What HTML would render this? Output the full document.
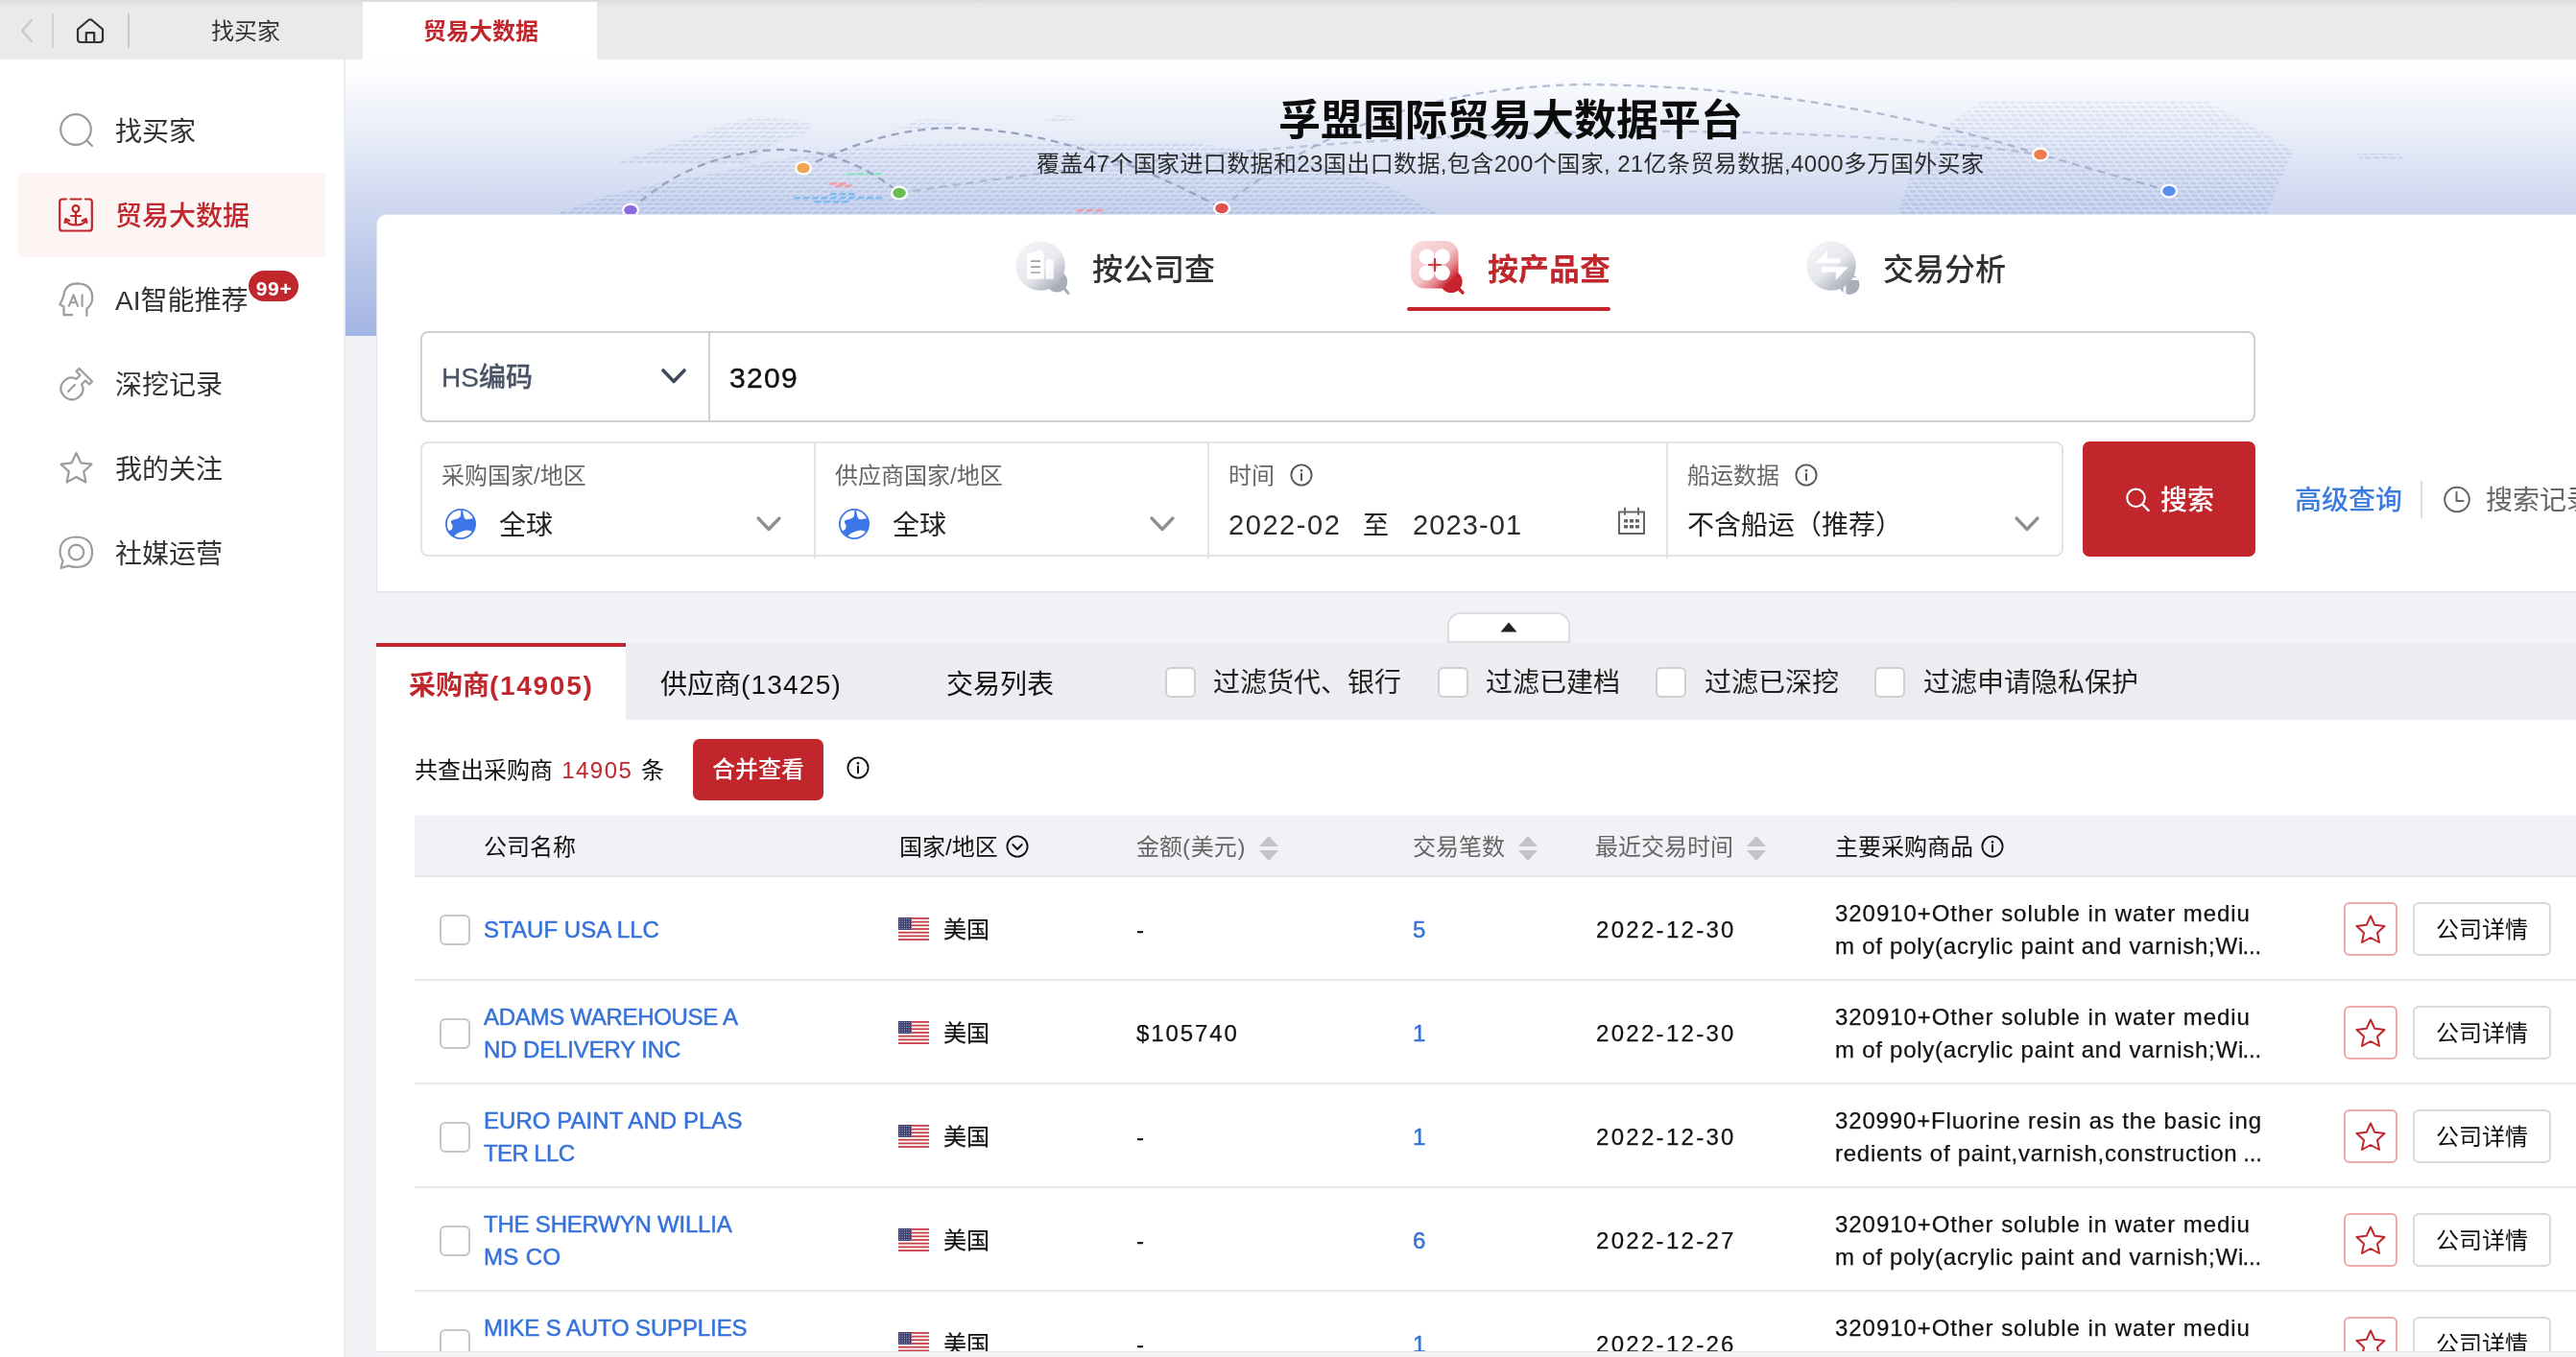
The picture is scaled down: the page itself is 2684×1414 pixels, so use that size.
<!DOCTYPE html>
<html lang="zh-CN"><head><meta charset="utf-8"><title>贸易大数据</title>
<style>
*{box-sizing:border-box;margin:0;padding:0}
html,body{width:2684px;height:1414px;overflow:hidden}
body{font-family:"Liberation Sans","Noto Sans CJK SC",sans-serif;position:relative;background:#f1f2f6;color:#222;-webkit-font-smoothing:antialiased}
.a{position:absolute}
.t{position:absolute;white-space:nowrap;will-change:transform}
svg{position:absolute;overflow:visible}
.topbar{left:0;top:0;width:2684px;height:62px;background:linear-gradient(180deg,#d9dadc 0,#e3e4e6 3px,#e9eaec 8px)}
.side{left:0;top:62px;width:360px;height:1352px;background:#fff;border-right:2px solid #ececec}
.mi{left:120px;font-size:28px;line-height:40px;color:#333}
.card{left:392px;top:223px;width:2400px;height:395px;background:#fff;border-radius:11px 0 0 0;border:1px solid #e3e6ee;border-bottom:2px solid #e6e7ea}
.box{border:2px solid #dcdcde;border-radius:8px;background:#fff}
.lbl{font-size:24px;line-height:32px;color:#666}
.val{font-size:28px;line-height:40px;color:#222}
.cb{width:32px;height:32px;border:2px solid #cfcfd2;border-radius:6px;background:#fff}
.ft{font-size:28px;line-height:40px;color:#222;top:692px}
.th{font-size:24px;line-height:34px;top:866px}
.td{font-size:24px;line-height:34px;color:#111;-webkit-text-stroke:.25px}
.lnk{color:#3672da;-webkit-text-stroke:.5px #3672da}
.rowline{left:432px;width:2260px;height:2px;background:#e9e9ec}
.star{width:56px;height:56px;border:2px solid #eba9aa;border-radius:6px;background:#fff;left:2442px}
.dbtn{width:144px;height:56px;border:2px solid #d9d9dc;border-radius:6px;background:#fff;left:2514px;font-size:24px;line-height:54px;text-align:center;color:#111}
</style></head><body>
<div class="a topbar"></div>
<div class="a" style="left:378px;top:2px;width:244px;height:60px;background:#fff"></div>
<svg style="left:20px;top:18px" width="16" height="28" viewBox="0 0 16 28"><path d="M13 3 L3 14 L13 25" fill="none" stroke="#c8c8ca" stroke-width="2.2" stroke-linecap="round" stroke-linejoin="round"/></svg>
<div class="a" style="left:54px;top:14px;width:1.5px;height:36px;background:#d0d0d2"></div>
<svg style="left:78px;top:18px" width="32" height="28" viewBox="0 0 32 28"><path d="M3 12.5 L14.2 3 Q16 1.6 17.8 3 L29 12.5 V23 Q29 26 26 26 H6 Q3 26 3 23 Z" fill="none" stroke="#333" stroke-width="2.2" stroke-linejoin="round"/><path d="M11.8 26 V16.2 H20.2 V26" fill="none" stroke="#333" stroke-width="2.2" stroke-linejoin="round"/></svg>
<div class="a" style="left:133px;top:14px;width:2px;height:36px;background:#c9c9cb"></div>
<div class="t" style="left:220px;top:14px;font-size:24px;line-height:38px;color:#333">找买家</div>
<div class="t" style="left:441px;top:14px;font-size:24px;line-height:38px;color:#c0262b;font-weight:700">贸易大数据</div>
<div class="a side"></div>
<div class="a" style="left:19px;top:180px;width:320px;height:88px;background:#fdf5f4;border-radius:5px"></div>
<div class="t mi" style="top:118px">找买家</div>
<div class="t mi" style="top:206px;color:#c0262b;font-weight:500">贸易大数据</div>
<div class="t mi" style="top:294px">AI智能推荐</div>
<div class="t mi" style="top:382px">深挖记录</div>
<div class="t mi" style="top:470px">我的关注</div>
<div class="t mi" style="top:558px">社媒运营</div>
<div class="t" style="left:259px;top:282px;width:52px;height:32px;border-radius:16px;background:#c0262b;color:#fff;font-size:21px;line-height:37px;text-align:center;letter-spacing:.7px;font-weight:700;padding-left:1px">99+</div>
<svg style="left:60px;top:116px" width="40" height="40" viewBox="0 0 40 40"><circle cx="19" cy="19" r="15.8" fill="none" stroke="#9a9ca1" stroke-width="2.2"/><path d="M30.5 30.5 L36 36" stroke="#9a9ca1" stroke-width="2.2" stroke-linecap="round"/></svg>
<svg style="left:60px;top:204px" width="40" height="40" viewBox="0 0 40 40"><path d="M9 3.5 H5 Q2.2 3.5 2.2 6.3 V33.7 Q2.2 36.5 5 36.5 H33 Q35.8 36.5 35.8 33.7 V6.3 Q35.8 3.5 33 3.5 H29 M13.5 3.5 H24.5" fill="none" stroke="#c0262b" stroke-width="2.2" stroke-linecap="round"/><circle cx="19" cy="13.5" r="3.4" fill="none" stroke="#c0262b" stroke-width="2.2"/><path d="M19 17 V30 M14 21 H24 M8.5 24.5 Q10 30.5 19 30.5 Q28 30.5 29.5 24.5 M7.5 28 L8.5 24 L12.3 26 M30.5 28 L29.5 24 L25.7 26" fill="none" stroke="#c0262b" stroke-width="2.2" stroke-linecap="round" stroke-linejoin="round"/></svg>
<svg style="left:60px;top:292px" width="40" height="40" viewBox="0 0 40 40"><path d="M15.4 36.1 H6.5 V27.5 L2.3 25.3 Q5 21 6.3 16 Q8 3.4 20.7 3.4 Q36.2 4 36.2 18.4 Q36.2 25.5 30.4 29.5 V37" fill="none" stroke="#9a9ca1" stroke-width="2.2" stroke-linecap="round" stroke-linejoin="round"/><path d="M11.8 26.9 L16.6 15.3 L21 26.9 M13.5 23.2 H19.5 M25.6 15.3 V26.9" fill="none" stroke="#9a9ca1" stroke-width="2.1" stroke-linecap="round" stroke-linejoin="round"/></svg>
<svg style="left:60px;top:380px" width="40" height="40" viewBox="0 0 40 40"><path d="M22.5 4 L36 17.5 L33 20.5 L29 16.5 L25 20.5 Q29 27 23 33 Q15 40 7 33 Q-1 24 8 16 Q13 11.5 19.5 15 L23.5 11 L19.5 7 Z" fill="none" stroke="#9a9ca1" stroke-width="2.2" stroke-linejoin="round"/><path d="M11 28 L18 21" stroke="#9a9ca1" stroke-width="2.2" stroke-linecap="round"/></svg>
<svg style="left:60px;top:468px" width="40" height="40" viewBox="0 0 40 40"><path d="M19.5 4 L24.3 14.3 L35.5 15.7 L27.2 23.4 L29.4 34.5 L19.5 29 L9.6 34.5 L11.8 23.4 L3.5 15.7 L14.7 14.3 Z" fill="none" stroke="#9a9ca1" stroke-width="2.2" stroke-linejoin="round"/></svg>
<svg style="left:60px;top:556px" width="40" height="40" viewBox="0 0 40 40"><path d="M3.5 36 L5.5 28.5 Q2.5 24 2.5 19.5 Q2.5 4 19.5 3.5 Q36 4 36 19.5 Q36 34 20.5 35 Q15 35 11.5 33.5 Z" fill="none" stroke="#9a9ca1" stroke-width="2.2" stroke-linejoin="round"/><circle cx="19.5" cy="19.5" r="7.8" fill="none" stroke="#9a9ca1" stroke-width="2.2"/></svg>
<div class="a" style="left:360px;top:62px;width:2324px;height:288px;background:linear-gradient(180deg,#fefeff 0%,#fbfcfe 7%,#ccd6ef 55.5%,#a3b4e2 100%)"></div>
<svg style="left:360px;top:62px;overflow:hidden" width="2324" height="162" viewBox="0 0 2324 162"><defs>
<pattern id="dpL" width="8.8" height="4.4" patternUnits="userSpaceOnUse" patternTransform="skewX(-50)"><rect x="0" y="0" width="6.4" height="2.3" fill="#8fa3d4"/></pattern>
<pattern id="dpR" width="8.8" height="4.4" patternUnits="userSpaceOnUse" patternTransform="skewX(38)"><rect x="0" y="0" width="6.4" height="2.3" fill="#8fa3d4"/></pattern>
<linearGradient id="fadeL" x1="0" y1="0" x2="0" y2="1"><stop offset="0" stop-color="#fff" stop-opacity=".2"/><stop offset=".45" stop-color="#fff" stop-opacity=".55"/><stop offset="1" stop-color="#fff" stop-opacity="1"/></linearGradient>
<mask id="mk" maskUnits="userSpaceOnUse" x="0" y="0" width="2324" height="162"><rect x="0" y="0" width="2324" height="162" fill="url(#fadeL)"/></mask>
<clipPath id="contL"><polygon points="283,108 340,88 400,66 430,59 485,65 482,76 445,88 420,108"/><polygon points="215,162 272,142 330,128 388,118 435,107 505,95 582,89 737,85 890,88 1000,103 1090,133 1140,162"/><polygon points="574,72 600,62 644,64 630,72"/><polygon points="725,66 737,58 765,59 755,66"/></clipPath>
<clipPath id="contR"><polygon points="1704,44 1940,44 1985,68 2030,96 2015,128 2002,162 1617,162 1630,123 1642,96 1670,68"/><polygon points="2095,98 2140,98 2145,105 2100,105"/></clipPath>
</defs><g mask="url(#mk)" opacity=".4"><rect x="0" y="0" width="2324" height="162" fill="url(#dpL)" clip-path="url(#contL)"/><rect x="0" y="0" width="2324" height="162" fill="url(#dpR)" clip-path="url(#contR)"/></g><path d="M524.0 118.0 l7 0 l-2.6 2.6 l-7 0z" fill="#8fe3c4"/><path d="M533.5 118.0 l7 0 l-2.6 2.6 l-7 0z" fill="#8fe3c4"/><path d="M543.0 118.0 l7 0 l-2.6 2.6 l-7 0z" fill="#8fe3c4"/><path d="M552.5 118.0 l7 0 l-2.6 2.6 l-7 0z" fill="#8fe3c4"/><path d="M506.0 128.0 l7 0 l-2.6 2.6 l-7 0z" fill="#f29aa0"/><path d="M515.5 128.0 l7 0 l-2.6 2.6 l-7 0z" fill="#f29aa0"/><path d="M512.0 130.5 l7 0 l-2.6 2.6 l-7 0z" fill="#f29aa0"/><path d="M521.5 130.5 l7 0 l-2.6 2.6 l-7 0z" fill="#f29aa0"/><path d="M468.0 143.0 l7 0 l-2.6 2.6 l-7 0z" fill="#7fbdf0"/><path d="M477.5 143.0 l7 0 l-2.6 2.6 l-7 0z" fill="#7fbdf0"/><path d="M487.0 143.0 l7 0 l-2.6 2.6 l-7 0z" fill="#7fbdf0"/><path d="M496.5 143.0 l7 0 l-2.6 2.6 l-7 0z" fill="#7fbdf0"/><path d="M506.0 143.0 l7 0 l-2.6 2.6 l-7 0z" fill="#7fbdf0"/><path d="M515.5 143.0 l7 0 l-2.6 2.6 l-7 0z" fill="#7fbdf0"/><path d="M525.0 143.0 l7 0 l-2.6 2.6 l-7 0z" fill="#7fbdf0"/><path d="M534.5 143.0 l7 0 l-2.6 2.6 l-7 0z" fill="#7fbdf0"/><path d="M544.0 143.0 l7 0 l-2.6 2.6 l-7 0z" fill="#7fbdf0"/><path d="M553.5 143.0 l7 0 l-2.6 2.6 l-7 0z" fill="#7fbdf0"/><path d="M490.0 147.0 l7 0 l-2.6 2.6 l-7 0z" fill="#7fbdf0"/><path d="M499.5 147.0 l7 0 l-2.6 2.6 l-7 0z" fill="#7fbdf0"/><path d="M509.0 147.0 l7 0 l-2.6 2.6 l-7 0z" fill="#7fbdf0"/><path d="M518.5 147.0 l7 0 l-2.6 2.6 l-7 0z" fill="#7fbdf0"/><path d="M506.0 139.0 l7 0 l-2.6 2.6 l-7 0z" fill="#7fbdf0"/><path d="M515.5 139.0 l7 0 l-2.6 2.6 l-7 0z" fill="#7fbdf0"/><path d="M525.0 139.0 l7 0 l-2.6 2.6 l-7 0z" fill="#7fbdf0"/><path d="M763.0 156.0 l7 0 l-2.6 2.6 l-7 0z" fill="#f29aa0"/><path d="M773.0 156.0 l7 0 l-2.6 2.6 l-7 0z" fill="#f29aa0"/><path d="M783.0 156.0 l7 0 l-2.6 2.6 l-7 0z" fill="#f29aa0"/><path d="M297.0 157.0 Q360.0 98.0 450.0 94.0 Q520.0 92.0 577.0 139.0" fill="none" stroke="#98a3c2" stroke-width="2.3" stroke-dasharray="8 6" stroke-linecap="butt"/><path d="M477.0 113.0 Q570.0 66.0 650.0 72.0 Q770.0 78.0 913.0 155.0" fill="none" stroke="#98a3c2" stroke-width="2.3" stroke-dasharray="8 6" stroke-linecap="butt"/><path d="M913.0 155.0 Q1060.0 30.0 1290.0 26.0 Q1540.0 28.0 1766.0 99.0 L1900.0 137.0" fill="none" stroke="#98a3c2" stroke-width="2.3" stroke-dasharray="8 6" stroke-linecap="butt" opacity=".7"/><path d="M577.0 139.0 Q990.0 78.0 1340.0 75.0 Q1590.0 74.0 1766.0 99.0" fill="none" stroke="#98a3c2" stroke-width="2.3" stroke-dasharray="8 6" stroke-linecap="butt" opacity=".55"/><ellipse cx="297.0" cy="157.0" rx="9" ry="7.6" fill="#fff"/><ellipse cx="297.0" cy="157.0" rx="6.8" ry="5.2" fill="#8a6be0"/><ellipse cx="477.0" cy="113.0" rx="9" ry="7.6" fill="#fff"/><ellipse cx="477.0" cy="113.0" rx="6.8" ry="5.2" fill="#eea555"/><ellipse cx="577.0" cy="139.0" rx="9" ry="7.6" fill="#fff"/><ellipse cx="577.0" cy="139.0" rx="6.8" ry="5.2" fill="#6cbd55"/><ellipse cx="913.0" cy="155.0" rx="9" ry="7.6" fill="#fff"/><ellipse cx="913.0" cy="155.0" rx="6.8" ry="5.2" fill="#e0524f"/><ellipse cx="1766.0" cy="99.0" rx="9" ry="7.6" fill="#fff"/><ellipse cx="1766.0" cy="99.0" rx="6.8" ry="5.2" fill="#ee7a4e"/><ellipse cx="1900.0" cy="137.0" rx="9" ry="7.6" fill="#fff"/><ellipse cx="1900.0" cy="137.0" rx="6.8" ry="5.2" fill="#5b8df0"/></svg>
<div class="t" style="left:1332px;top:94px;font-size:44px;line-height:64px;font-weight:700;color:#0b0b0b">孚盟国际贸易大数据平台</div>
<div class="t" style="left:1080px;top:154px;font-size:24px;line-height:34px;color:#2d2d2d;letter-spacing:.39px">覆盖47个国家进口数据和23国出口数据,包含200个国家, 21亿条贸易数据,4000多万国外买家</div>
<div class="a card"></div>
<div class="t" style="left:1138px;top:259px;font-size:32px;line-height:44px;color:#303030;font-weight:500">按公司查</div>
<div class="t" style="left:1550px;top:259px;font-size:32px;line-height:44px;color:#c0262b;font-weight:700">按产品查</div>
<div class="t" style="left:1962px;top:259px;font-size:32px;line-height:44px;color:#303030;font-weight:500">交易分析</div>
<div class="a" style="left:1466px;top:320px;width:212px;height:4px;background:#c0262b;border-radius:2px"></div>
<svg style="left:1050px;top:244px" width="70" height="70" viewBox="1050 244 70 70">
<defs><linearGradient id="g1" x1="0.15" y1="0.1" x2="0.85" y2="0.95"><stop offset="0" stop-color="#f3f4f7"/><stop offset=".55" stop-color="#e7e8ed"/><stop offset=".8" stop-color="#c3c7d0"/><stop offset="1" stop-color="#a7acb7"/></linearGradient>
<linearGradient id="g1b" x1="0" y1="0" x2="1" y2="0"><stop offset="0" stop-color="#fff"/><stop offset="1" stop-color="#fff" stop-opacity=".8"/></linearGradient></defs>
<circle cx="1101.3" cy="293.5" r="10.9" fill="#a9aeb9"/>
<path d="M1108.3 299.7 L1113 305.5" stroke="#a9aeb9" stroke-width="3" stroke-linecap="round"/>
<circle cx="1084" cy="277" r="25.7" fill="url(#g1)"/>
<path d="M1070 290.7 V266.5 Q1070 264.8 1071.6 264.2 L1082.8 260.9 Q1087.7 260.6 1087.7 265.5 V290.7 Z" fill="#fff"/>
<path d="M1089.7 290.7 V273.5 Q1089.7 269.4 1093.8 269.4 Q1097.9 269.4 1097.9 273.5 V290.7 Z" fill="url(#g1b)"/>
<path d="M1074 272.1 H1084 M1074 278.1 H1084 M1074 284 H1084" stroke="#9da2ac" stroke-width="1.7"/>
</svg><svg style="left:1462px;top:244px" width="70" height="70" viewBox="1462 244 70 70">
<defs><linearGradient id="g2" x1="0.1" y1="0.1" x2="0.95" y2="0.95"><stop offset="0" stop-color="#f8dadd"/><stop offset=".5" stop-color="#f3c6ca"/><stop offset=".72" stop-color="#e27f86"/><stop offset=".88" stop-color="#c9252e"/><stop offset="1" stop-color="#c8232c"/></linearGradient></defs>
<circle cx="1512" cy="293.5" r="11.6" fill="#c8232c"/>
<path d="M1519.5 300.5 L1524 305" stroke="#c8232c" stroke-width="3.4" stroke-linecap="round"/>
<rect x="1470" y="251" width="49.5" height="49.5" rx="14" fill="url(#g2)"/>
<circle cx="1486.5" cy="267.5" r="8" fill="#fff"/><circle cx="1502.8" cy="267.5" r="8" fill="#fff"/><circle cx="1486.5" cy="284.3" r="8" fill="#fff"/><circle cx="1502.8" cy="284.3" r="8" fill="#fff"/>
<path d="M1488 276 H1502 M1495 269 V283" stroke="#b8212b" stroke-width="1.7"/>
</svg><svg style="left:1874px;top:244px" width="70" height="70" viewBox="1874 244 70 70">
<defs><linearGradient id="g3" x1="0.15" y1="0.1" x2="0.85" y2="0.95"><stop offset="0" stop-color="#f3f4f7"/><stop offset=".5" stop-color="#e6e8ed"/><stop offset=".78" stop-color="#bfc3cc"/><stop offset="1" stop-color="#a7acb7"/></linearGradient></defs>
<circle cx="1927" cy="296.5" r="10.5" fill="#a9aeb9"/>
<path d="M1916 290.5 H1940 M1922 284 V310" stroke="#f4f5f8" stroke-width="3"/>
<circle cx="1908" cy="277" r="25.7" fill="url(#g3)"/>
<path d="M1891 274 L1904 261.3 V269.5 H1917.5 V274 Z" fill="#fff"/>
<path d="M1898 278.3 H1925.7 L1912.8 291.9 V283.4 H1898 Z" fill="#fff"/>
</svg>
<div class="a box" style="left:438px;top:345px;width:1912px;height:95px;border-color:#cfcfd2"></div>
<div class="a" style="left:738px;top:347px;width:2px;height:91px;background:#cfcfd2"></div>
<div class="t" style="left:460px;top:374px;font-size:28px;line-height:40px;color:#4a5366;font-weight:500;-webkit-text-stroke:.3px #4a5366">HS编码</div>
<svg style="left:689px;top:384px" width="26" height="16" viewBox="0 0 26 16"><path d="M2 2 L13 13.5 L24 2" fill="none" stroke="#3f4a5c" stroke-width="3.6" stroke-linecap="round" stroke-linejoin="round"/></svg>
<div class="t" style="left:760px;top:374px;font-size:30px;line-height:40px;color:#111;letter-spacing:1.33px;-webkit-text-stroke:.4px #111">3209</div>

<div class="a box" style="left:438px;top:460px;width:1712px;height:120px;border-color:#e1e2e5"></div>
<div class="a" style="left:848px;top:462px;width:2px;height:120px;background:#e1e2e5"></div>
<div class="a" style="left:1258px;top:462px;width:2px;height:120px;background:#e1e2e5"></div>
<div class="a" style="left:1736px;top:462px;width:2px;height:120px;background:#e1e2e5"></div>
<div class="t lbl" style="left:460px;top:480px">采购国家/地区</div>
<div class="t lbl" style="left:870px;top:480px">供应商国家/地区</div>
<div class="t lbl" style="left:1280px;top:480px">时间</div>
<div class="t lbl" style="left:1758px;top:480px">船运数据</div>
<div class="t val" style="left:520px;top:528px">全球</div>
<div class="t val" style="left:930px;top:528px">全球</div>
<div class="t val" style="left:1280px;top:527px;font-size:29px;color:#2b2b2b;letter-spacing:1.57px">2022-02</div>
<div class="t val" style="left:1420px;top:528px;font-size:27px">至</div>
<div class="t val" style="left:1472px;top:527px;font-size:29px;color:#2b2b2b;letter-spacing:1.13px">2023-01</div>
<div class="t val" style="left:1758px;top:528px">不含船运（推荐）</div>
<svg style="left:464px;top:530px" width="32" height="32" viewBox="0 0 32 32"><circle cx="16" cy="16" r="15.1" fill="#fff" stroke="#3d76e8" stroke-width="1.8"/><path d="M16.3 1.5 L16.1 7.4 Q15 9.5 12.6 10.5 L7.1 12 Q5.5 13 6 14.4 L7.5 17.5 Q7.8 20 6.8 21.4 L2.8 24 A15.2 15.2 0 0 0 9 29.5 Q10.5 26.5 13.4 25.2 L19.6 22.9 Q23 22 25.8 22.9 L28.6 24.3 A15.2 15.2 0 0 0 30.2 9.5 Q28.5 10.5 25.8 10.7 L21.9 11.3 Q20.2 10.5 19.6 8.9 L18.4 4.3 L18.1 1.5 Z" fill="#3d76e8"/></svg><svg style="left:874px;top:530px" width="32" height="32" viewBox="0 0 32 32"><circle cx="16" cy="16" r="15.1" fill="#fff" stroke="#3d76e8" stroke-width="1.8"/><path d="M16.3 1.5 L16.1 7.4 Q15 9.5 12.6 10.5 L7.1 12 Q5.5 13 6 14.4 L7.5 17.5 Q7.8 20 6.8 21.4 L2.8 24 A15.2 15.2 0 0 0 9 29.5 Q10.5 26.5 13.4 25.2 L19.6 22.9 Q23 22 25.8 22.9 L28.6 24.3 A15.2 15.2 0 0 0 30.2 9.5 Q28.5 10.5 25.8 10.7 L21.9 11.3 Q20.2 10.5 19.6 8.9 L18.4 4.3 L18.1 1.5 Z" fill="#3d76e8"/></svg><svg style="left:788px;top:538px" width="26" height="16" viewBox="0 0 26 16"><path d="M2 2 L13 13.5 L24 2" fill="none" stroke="#8e8e93" stroke-width="3.3" stroke-linecap="round" stroke-linejoin="round"/></svg><svg style="left:1198px;top:538px" width="26" height="16" viewBox="0 0 26 16"><path d="M2 2 L13 13.5 L24 2" fill="none" stroke="#8e8e93" stroke-width="3.3" stroke-linecap="round" stroke-linejoin="round"/></svg><svg style="left:2099px;top:538px" width="26" height="16" viewBox="0 0 26 16"><path d="M2 2 L13 13.5 L24 2" fill="none" stroke="#8e8e93" stroke-width="3.3" stroke-linecap="round" stroke-linejoin="round"/></svg><svg style="left:1344.0px;top:483.0px" width="24" height="24" viewBox="0 0 24 24"><circle cx="12" cy="12" r="10.6" fill="none" stroke="#555" stroke-width="1.8"/><circle cx="12" cy="7.3" r="1.3" fill="#555"/><path d="M12 10.5 V17.3" stroke="#555" stroke-width="2" stroke-linecap="round"/></svg><svg style="left:1870.0px;top:483.0px" width="24" height="24" viewBox="0 0 24 24"><circle cx="12" cy="12" r="10.6" fill="none" stroke="#555" stroke-width="1.8"/><circle cx="12" cy="7.3" r="1.3" fill="#555"/><path d="M12 10.5 V17.3" stroke="#555" stroke-width="2" stroke-linecap="round"/></svg><svg style="left:1685px;top:528px" width="30" height="30" viewBox="0 0 30 30"><path d="M2 5.5 H28 V28 H2 Z" fill="none" stroke="#666" stroke-width="2"/><path d="M8 1.5 V8 M22 1.5 V8" stroke="#666" stroke-width="2" stroke-linecap="round"/><path d="M7 13 h4 v3.4 h-4z M13 13 h4 v3.4 h-4z M19 13 h4 v3.4 h-4z M7 19 h4 v3.4 h-4z M13 19 h4 v3.4 h-4z M19 19 h4 v3.4 h-4z" fill="#666"/></svg><div class="a" style="left:2170px;top:460px;width:180px;height:120px;background:#c0262b;border-radius:7px"></div>
<svg style="left:2213px;top:506px" width="30" height="30" viewBox="0 0 30 30"><circle cx="12.5" cy="12.8" r="9.2" fill="none" stroke="#fff" stroke-width="2.1"/><path d="M19.3 19.6 L25.6 25.9" stroke="#fff" stroke-width="2.3" stroke-linecap="round"/></svg>
<div class="t" style="left:2251px;top:502px;font-size:28px;line-height:40px;color:#fff;font-weight:500">搜索</div>
<div class="t" style="left:2391px;top:502px;font-size:28px;line-height:40px;color:#3a7be0;font-weight:500">高级查询</div>
<div class="a" style="left:2522px;top:501px;width:2px;height:39px;background:#dcdcde"></div>
<svg style="left:2545px;top:506px" width="30" height="30" viewBox="0 0 30 30"><circle cx="15" cy="14.5" r="12.8" fill="none" stroke="#666" stroke-width="2"/><path d="M14.5 7 V16 H21.5" fill="none" stroke="#666" stroke-width="2" stroke-linecap="round" stroke-linejoin="round"/></svg>
<div class="t" style="left:2590px;top:502px;font-size:28px;line-height:40px;color:#666">搜索记录</div>
<div class="a" style="left:1508px;top:638px;width:128px;height:32px;background:#fff;border:2px solid #dcdde2;border-radius:14px 14px 0 0"></div>
<svg style="left:1563px;top:648px" width="18" height="11" viewBox="0 0 18 11"><path d="M9 0.5 L17.5 10.5 H0.5 Z" fill="#222"/></svg>
<div class="a" style="left:392px;top:670px;width:2292px;height:80px;background:#ecedf1"></div>
<div class="a" style="left:392px;top:750px;width:2292px;height:664px;background:#fff"></div>
<div class="a" style="left:392px;top:670px;width:260px;height:80px;background:#fff;border-top:4px solid #c0262b"></div>
<div class="t" style="left:426px;top:695px;font-size:28px;line-height:40px;color:#c0262b;font-weight:700">采购商<span style="letter-spacing:1.7px">(14905)</span></div>
<div class="t" style="left:688px;top:694px;font-size:28px;line-height:40px;color:#111">供应商<span style="letter-spacing:1.2px">(13425)</span></div>
<div class="t" style="left:986px;top:694px;font-size:28px;line-height:40px;color:#111">交易列表</div>
<div class="a cb" style="left:1214px;top:695px"></div><div class="t ft" style="left:1264px">过滤货代、银行</div>
<div class="a cb" style="left:1498px;top:695px"></div><div class="t ft" style="left:1548px">过滤已建档</div>
<div class="a cb" style="left:1725px;top:695px"></div><div class="t ft" style="left:1776px">过滤已深挖</div>
<div class="a cb" style="left:1953px;top:695px"></div><div class="t ft" style="left:2004px">过滤申请隐私保护</div>
<div class="t" style="left:432px;top:786px;font-size:24px;line-height:34px;color:#111">共查出采购商 <span style="color:#c0262b;letter-spacing:1.5px;margin:0 2px 0 2.5px">14905</span> 条</div>
<div class="t" style="left:722px;top:770px;width:136px;height:64px;background:#c0262b;border-radius:7px;color:#fff;font-size:24px;line-height:64px;text-align:center;font-weight:500">合并查看</div>
<svg style="left:882.0px;top:788.0px" width="24" height="24" viewBox="0 0 24 24"><circle cx="12" cy="12" r="10.6" fill="none" stroke="#111" stroke-width="1.8"/><circle cx="12" cy="7.3" r="1.3" fill="#111"/><path d="M12 10.5 V17.3" stroke="#111" stroke-width="2" stroke-linecap="round"/></svg><div class="a" style="left:432px;top:850px;width:2260px;height:63px;background:#f1f2f6"></div>
<div class="a rowline" style="top:912px;background:#e4e5e9"></div>
<div class="t th" style="left:504px;color:#111">公司名称</div>
<div class="t th" style="left:937px;color:#111">国家/地区</div>
<div class="t th" style="left:1184px;color:#666">金额<span style="letter-spacing:.8px">(</span>美元<span style="margin-left:.8px">)</span></div>
<div class="t th" style="left:1472px;color:#666">交易笔数</div>
<div class="t th" style="left:1662px;color:#666">最近交易时间</div>
<div class="t th" style="left:1912px;color:#111">主要采购商品</div>
<svg style="left:1048px;top:870px" width="24" height="24" viewBox="0 0 24 24"><circle cx="12" cy="12" r="10.6" fill="none" stroke="#111" stroke-width="1.8"/><path d="M7.2 10 L12 15 L16.8 10" fill="none" stroke="#111" stroke-width="1.9" stroke-linecap="round" stroke-linejoin="round"/></svg>
<svg style="left:2064.0px;top:870.0px" width="24" height="24" viewBox="0 0 24 24"><circle cx="12" cy="12" r="10.6" fill="none" stroke="#111" stroke-width="1.8"/><circle cx="12" cy="7.3" r="1.3" fill="#111"/><path d="M12 10.5 V17.3" stroke="#111" stroke-width="2" stroke-linecap="round"/></svg><svg style="left:1311px;top:870px" width="22" height="28" viewBox="0 0 22 28"><path d="M11 1 L21 12 H1 Z M11 27 L21 16 H1 Z" fill="#c3c4c8"/></svg><svg style="left:1581px;top:870px" width="22" height="28" viewBox="0 0 22 28"><path d="M11 1 L21 12 H1 Z M11 27 L21 16 H1 Z" fill="#c3c4c8"/></svg><svg style="left:1819px;top:870px" width="22" height="28" viewBox="0 0 22 28"><path d="M11 1 L21 12 H1 Z M11 27 L21 16 H1 Z" fill="#c3c4c8"/></svg><div class="a rowline" style="top:1020px"></div><div class="a cb" style="left:458px;top:953px;border-color:#c6c6c9"></div><div class="t td lnk" style="left:504px;top:952px"><span style="letter-spacing:0.05px">STAUF USA LLC</span></div><svg style="left:936px;top:956px" width="32" height="24" viewBox="0 0 32 24"><rect width="32" height="24" fill="#fff"/><g fill="#c8414b"><rect y="0.00" width="32" height="1.85"/><rect y="3.69" width="32" height="1.85"/><rect y="7.38" width="32" height="1.85"/><rect y="11.08" width="32" height="1.85"/><rect y="14.77" width="32" height="1.85"/><rect y="18.46" width="32" height="1.85"/><rect y="22.15" width="32" height="1.85"/></g><rect width="14" height="13" fill="#3c3b6e"/><g fill="#fff" opacity=".75"><circle cx="1.6" cy="1.6" r=".55"/><circle cx="4.0" cy="1.6" r=".55"/><circle cx="6.4" cy="1.6" r=".55"/><circle cx="8.8" cy="1.6" r=".55"/><circle cx="11.2" cy="1.6" r=".55"/><circle cx="13.6" cy="1.6" r=".55"/><circle cx="1.6" cy="4.1" r=".55"/><circle cx="4.0" cy="4.1" r=".55"/><circle cx="6.4" cy="4.1" r=".55"/><circle cx="8.8" cy="4.1" r=".55"/><circle cx="11.2" cy="4.1" r=".55"/><circle cx="13.6" cy="4.1" r=".55"/><circle cx="1.6" cy="6.6" r=".55"/><circle cx="4.0" cy="6.6" r=".55"/><circle cx="6.4" cy="6.6" r=".55"/><circle cx="8.8" cy="6.6" r=".55"/><circle cx="11.2" cy="6.6" r=".55"/><circle cx="13.6" cy="6.6" r=".55"/><circle cx="1.6" cy="9.1" r=".55"/><circle cx="4.0" cy="9.1" r=".55"/><circle cx="6.4" cy="9.1" r=".55"/><circle cx="8.8" cy="9.1" r=".55"/><circle cx="11.2" cy="9.1" r=".55"/><circle cx="13.6" cy="9.1" r=".55"/><circle cx="1.6" cy="11.6" r=".55"/><circle cx="4.0" cy="11.6" r=".55"/><circle cx="6.4" cy="11.6" r=".55"/><circle cx="8.8" cy="11.6" r=".55"/><circle cx="11.2" cy="11.6" r=".55"/><circle cx="13.6" cy="11.6" r=".55"/></g></svg><div class="t td" style="left:983px;top:952px">美国</div><div class="t td" style="left:1184px;top:952px;letter-spacing:1.92px">-</div><div class="t td lnk" style="left:1472px;top:952px">5</div><div class="t td" style="left:1663px;top:952px;letter-spacing:2.3px">2022-12-30</div><div class="t td" style="left:1912px;top:935px"><span style="letter-spacing:0.95px">320910+Other soluble in water mediu</span><br><span style="letter-spacing:0.75px">m of poly(acrylic paint and varnish;Wi</span><span style="letter-spacing:-.2px;margin-left:-1.5px">...</span></div><div class="a star" style="top:940px"></div><svg style="left:2452px;top:951px" width="36" height="36" viewBox="0 0 36 36"><path d="M18 3.5 L22.3 12.8 L32.5 14 L25 21 L27 31 L18 26 L9 31 L11 21 L3.5 14 L13.7 12.8 Z" fill="none" stroke="#c0262b" stroke-width="2" stroke-linejoin="round"/></svg><div class="t dbtn" style="top:940px">公司详情</div><div class="a rowline" style="top:1128px"></div><div class="a cb" style="left:458px;top:1061px;border-color:#c6c6c9"></div><div class="t td lnk" style="left:504px;top:1043px"><span style="letter-spacing:-0.3px">ADAMS WAREHOUSE A</span><br><span style="letter-spacing:-0.13px">ND DELIVERY INC</span></div><svg style="left:936px;top:1064px" width="32" height="24" viewBox="0 0 32 24"><rect width="32" height="24" fill="#fff"/><g fill="#c8414b"><rect y="0.00" width="32" height="1.85"/><rect y="3.69" width="32" height="1.85"/><rect y="7.38" width="32" height="1.85"/><rect y="11.08" width="32" height="1.85"/><rect y="14.77" width="32" height="1.85"/><rect y="18.46" width="32" height="1.85"/><rect y="22.15" width="32" height="1.85"/></g><rect width="14" height="13" fill="#3c3b6e"/><g fill="#fff" opacity=".75"><circle cx="1.6" cy="1.6" r=".55"/><circle cx="4.0" cy="1.6" r=".55"/><circle cx="6.4" cy="1.6" r=".55"/><circle cx="8.8" cy="1.6" r=".55"/><circle cx="11.2" cy="1.6" r=".55"/><circle cx="13.6" cy="1.6" r=".55"/><circle cx="1.6" cy="4.1" r=".55"/><circle cx="4.0" cy="4.1" r=".55"/><circle cx="6.4" cy="4.1" r=".55"/><circle cx="8.8" cy="4.1" r=".55"/><circle cx="11.2" cy="4.1" r=".55"/><circle cx="13.6" cy="4.1" r=".55"/><circle cx="1.6" cy="6.6" r=".55"/><circle cx="4.0" cy="6.6" r=".55"/><circle cx="6.4" cy="6.6" r=".55"/><circle cx="8.8" cy="6.6" r=".55"/><circle cx="11.2" cy="6.6" r=".55"/><circle cx="13.6" cy="6.6" r=".55"/><circle cx="1.6" cy="9.1" r=".55"/><circle cx="4.0" cy="9.1" r=".55"/><circle cx="6.4" cy="9.1" r=".55"/><circle cx="8.8" cy="9.1" r=".55"/><circle cx="11.2" cy="9.1" r=".55"/><circle cx="13.6" cy="9.1" r=".55"/><circle cx="1.6" cy="11.6" r=".55"/><circle cx="4.0" cy="11.6" r=".55"/><circle cx="6.4" cy="11.6" r=".55"/><circle cx="8.8" cy="11.6" r=".55"/><circle cx="11.2" cy="11.6" r=".55"/><circle cx="13.6" cy="11.6" r=".55"/></g></svg><div class="t td" style="left:983px;top:1060px">美国</div><div class="t td" style="left:1184px;top:1060px;letter-spacing:1.92px">$105740</div><div class="t td lnk" style="left:1472px;top:1060px">1</div><div class="t td" style="left:1663px;top:1060px;letter-spacing:2.3px">2022-12-30</div><div class="t td" style="left:1912px;top:1043px"><span style="letter-spacing:0.95px">320910+Other soluble in water mediu</span><br><span style="letter-spacing:0.75px">m of poly(acrylic paint and varnish;Wi</span><span style="letter-spacing:-.2px;margin-left:-1.5px">...</span></div><div class="a star" style="top:1048px"></div><svg style="left:2452px;top:1059px" width="36" height="36" viewBox="0 0 36 36"><path d="M18 3.5 L22.3 12.8 L32.5 14 L25 21 L27 31 L18 26 L9 31 L11 21 L3.5 14 L13.7 12.8 Z" fill="none" stroke="#c0262b" stroke-width="2" stroke-linejoin="round"/></svg><div class="t dbtn" style="top:1048px">公司详情</div><div class="a rowline" style="top:1236px"></div><div class="a cb" style="left:458px;top:1169px;border-color:#c6c6c9"></div><div class="t td lnk" style="left:504px;top:1151px"><span style="letter-spacing:0.05px">EURO PAINT AND PLAS</span><br><span style="letter-spacing:-0.62px">TER LLC</span></div><svg style="left:936px;top:1172px" width="32" height="24" viewBox="0 0 32 24"><rect width="32" height="24" fill="#fff"/><g fill="#c8414b"><rect y="0.00" width="32" height="1.85"/><rect y="3.69" width="32" height="1.85"/><rect y="7.38" width="32" height="1.85"/><rect y="11.08" width="32" height="1.85"/><rect y="14.77" width="32" height="1.85"/><rect y="18.46" width="32" height="1.85"/><rect y="22.15" width="32" height="1.85"/></g><rect width="14" height="13" fill="#3c3b6e"/><g fill="#fff" opacity=".75"><circle cx="1.6" cy="1.6" r=".55"/><circle cx="4.0" cy="1.6" r=".55"/><circle cx="6.4" cy="1.6" r=".55"/><circle cx="8.8" cy="1.6" r=".55"/><circle cx="11.2" cy="1.6" r=".55"/><circle cx="13.6" cy="1.6" r=".55"/><circle cx="1.6" cy="4.1" r=".55"/><circle cx="4.0" cy="4.1" r=".55"/><circle cx="6.4" cy="4.1" r=".55"/><circle cx="8.8" cy="4.1" r=".55"/><circle cx="11.2" cy="4.1" r=".55"/><circle cx="13.6" cy="4.1" r=".55"/><circle cx="1.6" cy="6.6" r=".55"/><circle cx="4.0" cy="6.6" r=".55"/><circle cx="6.4" cy="6.6" r=".55"/><circle cx="8.8" cy="6.6" r=".55"/><circle cx="11.2" cy="6.6" r=".55"/><circle cx="13.6" cy="6.6" r=".55"/><circle cx="1.6" cy="9.1" r=".55"/><circle cx="4.0" cy="9.1" r=".55"/><circle cx="6.4" cy="9.1" r=".55"/><circle cx="8.8" cy="9.1" r=".55"/><circle cx="11.2" cy="9.1" r=".55"/><circle cx="13.6" cy="9.1" r=".55"/><circle cx="1.6" cy="11.6" r=".55"/><circle cx="4.0" cy="11.6" r=".55"/><circle cx="6.4" cy="11.6" r=".55"/><circle cx="8.8" cy="11.6" r=".55"/><circle cx="11.2" cy="11.6" r=".55"/><circle cx="13.6" cy="11.6" r=".55"/></g></svg><div class="t td" style="left:983px;top:1168px">美国</div><div class="t td" style="left:1184px;top:1168px;letter-spacing:1.92px">-</div><div class="t td lnk" style="left:1472px;top:1168px">1</div><div class="t td" style="left:1663px;top:1168px;letter-spacing:2.3px">2022-12-30</div><div class="t td" style="left:1912px;top:1151px"><span style="letter-spacing:0.84px">320990+Fluorine resin as the basic ing</span><br><span style="letter-spacing:0.75px">redients of paint,varnish,construction </span><span style="letter-spacing:-.2px;margin-left:-1.5px">...</span></div><div class="a star" style="top:1156px"></div><svg style="left:2452px;top:1167px" width="36" height="36" viewBox="0 0 36 36"><path d="M18 3.5 L22.3 12.8 L32.5 14 L25 21 L27 31 L18 26 L9 31 L11 21 L3.5 14 L13.7 12.8 Z" fill="none" stroke="#c0262b" stroke-width="2" stroke-linejoin="round"/></svg><div class="t dbtn" style="top:1156px">公司详情</div><div class="a rowline" style="top:1344px"></div><div class="a cb" style="left:458px;top:1277px;border-color:#c6c6c9"></div><div class="t td lnk" style="left:504px;top:1259px"><span style="letter-spacing:-0.21px">THE SHERWYN WILLIA</span><br><span style="letter-spacing:0.35px">MS CO</span></div><svg style="left:936px;top:1280px" width="32" height="24" viewBox="0 0 32 24"><rect width="32" height="24" fill="#fff"/><g fill="#c8414b"><rect y="0.00" width="32" height="1.85"/><rect y="3.69" width="32" height="1.85"/><rect y="7.38" width="32" height="1.85"/><rect y="11.08" width="32" height="1.85"/><rect y="14.77" width="32" height="1.85"/><rect y="18.46" width="32" height="1.85"/><rect y="22.15" width="32" height="1.85"/></g><rect width="14" height="13" fill="#3c3b6e"/><g fill="#fff" opacity=".75"><circle cx="1.6" cy="1.6" r=".55"/><circle cx="4.0" cy="1.6" r=".55"/><circle cx="6.4" cy="1.6" r=".55"/><circle cx="8.8" cy="1.6" r=".55"/><circle cx="11.2" cy="1.6" r=".55"/><circle cx="13.6" cy="1.6" r=".55"/><circle cx="1.6" cy="4.1" r=".55"/><circle cx="4.0" cy="4.1" r=".55"/><circle cx="6.4" cy="4.1" r=".55"/><circle cx="8.8" cy="4.1" r=".55"/><circle cx="11.2" cy="4.1" r=".55"/><circle cx="13.6" cy="4.1" r=".55"/><circle cx="1.6" cy="6.6" r=".55"/><circle cx="4.0" cy="6.6" r=".55"/><circle cx="6.4" cy="6.6" r=".55"/><circle cx="8.8" cy="6.6" r=".55"/><circle cx="11.2" cy="6.6" r=".55"/><circle cx="13.6" cy="6.6" r=".55"/><circle cx="1.6" cy="9.1" r=".55"/><circle cx="4.0" cy="9.1" r=".55"/><circle cx="6.4" cy="9.1" r=".55"/><circle cx="8.8" cy="9.1" r=".55"/><circle cx="11.2" cy="9.1" r=".55"/><circle cx="13.6" cy="9.1" r=".55"/><circle cx="1.6" cy="11.6" r=".55"/><circle cx="4.0" cy="11.6" r=".55"/><circle cx="6.4" cy="11.6" r=".55"/><circle cx="8.8" cy="11.6" r=".55"/><circle cx="11.2" cy="11.6" r=".55"/><circle cx="13.6" cy="11.6" r=".55"/></g></svg><div class="t td" style="left:983px;top:1276px">美国</div><div class="t td" style="left:1184px;top:1276px;letter-spacing:1.92px">-</div><div class="t td lnk" style="left:1472px;top:1276px">6</div><div class="t td" style="left:1663px;top:1276px;letter-spacing:2.3px">2022-12-27</div><div class="t td" style="left:1912px;top:1259px"><span style="letter-spacing:0.95px">320910+Other soluble in water mediu</span><br><span style="letter-spacing:0.75px">m of poly(acrylic paint and varnish;Wi</span><span style="letter-spacing:-.2px;margin-left:-1.5px">...</span></div><div class="a star" style="top:1264px"></div><svg style="left:2452px;top:1275px" width="36" height="36" viewBox="0 0 36 36"><path d="M18 3.5 L22.3 12.8 L32.5 14 L25 21 L27 31 L18 26 L9 31 L11 21 L3.5 14 L13.7 12.8 Z" fill="none" stroke="#c0262b" stroke-width="2" stroke-linejoin="round"/></svg><div class="t dbtn" style="top:1264px">公司详情</div><div class="a rowline" style="top:1452px"></div><div class="a cb" style="left:458px;top:1385px;border-color:#c6c6c9"></div><div class="t td lnk" style="left:504px;top:1367px"><span style="letter-spacing:-0.13px">MIKE S AUTO SUPPLIES</span><br><span style="letter-spacing:0px">INC</span></div><svg style="left:936px;top:1388px" width="32" height="24" viewBox="0 0 32 24"><rect width="32" height="24" fill="#fff"/><g fill="#c8414b"><rect y="0.00" width="32" height="1.85"/><rect y="3.69" width="32" height="1.85"/><rect y="7.38" width="32" height="1.85"/><rect y="11.08" width="32" height="1.85"/><rect y="14.77" width="32" height="1.85"/><rect y="18.46" width="32" height="1.85"/><rect y="22.15" width="32" height="1.85"/></g><rect width="14" height="13" fill="#3c3b6e"/><g fill="#fff" opacity=".75"><circle cx="1.6" cy="1.6" r=".55"/><circle cx="4.0" cy="1.6" r=".55"/><circle cx="6.4" cy="1.6" r=".55"/><circle cx="8.8" cy="1.6" r=".55"/><circle cx="11.2" cy="1.6" r=".55"/><circle cx="13.6" cy="1.6" r=".55"/><circle cx="1.6" cy="4.1" r=".55"/><circle cx="4.0" cy="4.1" r=".55"/><circle cx="6.4" cy="4.1" r=".55"/><circle cx="8.8" cy="4.1" r=".55"/><circle cx="11.2" cy="4.1" r=".55"/><circle cx="13.6" cy="4.1" r=".55"/><circle cx="1.6" cy="6.6" r=".55"/><circle cx="4.0" cy="6.6" r=".55"/><circle cx="6.4" cy="6.6" r=".55"/><circle cx="8.8" cy="6.6" r=".55"/><circle cx="11.2" cy="6.6" r=".55"/><circle cx="13.6" cy="6.6" r=".55"/><circle cx="1.6" cy="9.1" r=".55"/><circle cx="4.0" cy="9.1" r=".55"/><circle cx="6.4" cy="9.1" r=".55"/><circle cx="8.8" cy="9.1" r=".55"/><circle cx="11.2" cy="9.1" r=".55"/><circle cx="13.6" cy="9.1" r=".55"/><circle cx="1.6" cy="11.6" r=".55"/><circle cx="4.0" cy="11.6" r=".55"/><circle cx="6.4" cy="11.6" r=".55"/><circle cx="8.8" cy="11.6" r=".55"/><circle cx="11.2" cy="11.6" r=".55"/><circle cx="13.6" cy="11.6" r=".55"/></g></svg><div class="t td" style="left:983px;top:1384px">美国</div><div class="t td" style="left:1184px;top:1384px;letter-spacing:1.92px">-</div><div class="t td lnk" style="left:1472px;top:1384px">1</div><div class="t td" style="left:1663px;top:1384px;letter-spacing:2.3px">2022-12-26</div><div class="t td" style="left:1912px;top:1367px"><span style="letter-spacing:0.95px">320910+Other soluble in water mediu</span><br><span style="letter-spacing:0.75px">m of poly(acrylic paint and varnish;Wi</span><span style="letter-spacing:-.2px;margin-left:-1.5px">...</span></div><div class="a star" style="top:1372px"></div><svg style="left:2452px;top:1383px" width="36" height="36" viewBox="0 0 36 36"><path d="M18 3.5 L22.3 12.8 L32.5 14 L25 21 L27 31 L18 26 L9 31 L11 21 L3.5 14 L13.7 12.8 Z" fill="none" stroke="#c0262b" stroke-width="2" stroke-linejoin="round"/></svg><div class="t dbtn" style="top:1372px">公司详情</div><div class="a" style="left:392px;top:1408px;width:2292px;height:6px;background:#f4f4f6;border-top:1px solid #e4e4e6"></div>
</body></html>
